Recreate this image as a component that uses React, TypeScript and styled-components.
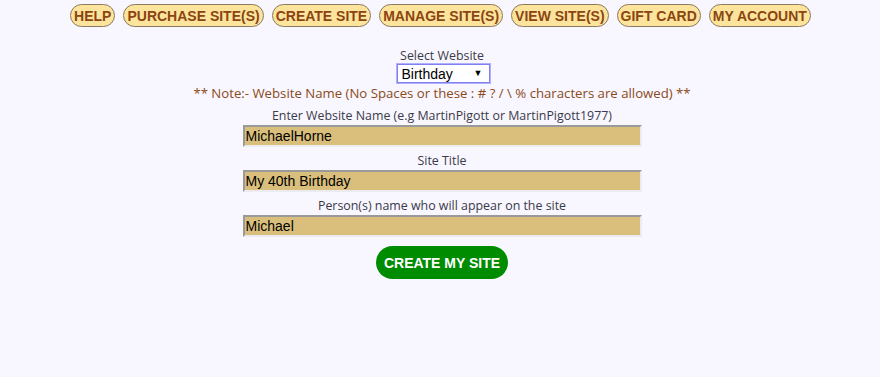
import React, { useState } from 'react';
import styled, { createGlobalStyle } from 'styled-components';

const GlobalStyle = createGlobalStyle`
    html, body {
        margin: 0;
        padding: 0;
        background: #f8f6fe;
    }
`;

const Page = styled.div`
    width: 880px;
    min-height: 377px;
    background: #f8f6fe;
    font-family: 'Open Sans', 'Noto Sans', sans-serif;
`;

const NavBar = styled.nav`
    display: flex;
    justify-content: center;
    gap: 8px;
    padding-top: 4px;
    padding-left: 1px;
`;

const NavButton = styled.a`
    display: inline-flex;
    align-items: center;
    height: 21px;
    padding: 0 3px;
    border: 1px solid #8a7a60;
    border-radius: 12px;
    background: #fde49c;
    color: #8b4513;
    font: bold 14px 'Liberation Sans', Arial, sans-serif;
    text-decoration: none;
    cursor: pointer;
`;

const Form = styled.form`
    display: flex;
    flex-direction: column;
    align-items: center;
    margin-top: 21px;
    padding-left: 4px;
`;

const Label = styled.label`
    color: #3a3a4a;
    font-size: 12.4px;
    line-height: 16px;
`;

const SelectWrap = styled.div`
    display: flex;
    position: relative;
    margin-left: 2px;

    &::after {
        content: '▼';
        position: absolute;
        right: 7px;
        top: 3px;
        font-size: 9px;
        line-height: 12px;
        color: #000;
        pointer-events: none;
    }
`;

const Select = styled.select`
    box-sizing: border-box;
    width: 93px;
    height: 19px;
    padding: 0 4px;
    border: 1px solid #8080f0;
    outline: 1px solid #b0b0ff;
    background: #fff;
    font: 14px 'Liberation Sans', Arial, sans-serif;
    color: #000;
    appearance: none;
`;

const Note = styled.p`
    margin: 1px 0 6px;
    color: #8b4a1a;
    font-size: 13.2px;
    line-height: 18px;
`;

const Field = styled.div`
    display: flex;
    flex-direction: column;
    align-items: center;
    margin-bottom: 6px;
`;

const TextInput = styled.input`
    box-sizing: border-box;
    width: 399px;
    height: 22px;
    margin-top: 1px;
    padding: 1px 1px;
    border: 2px solid;
    border-color: #9a9a9a #ececf0 #ececf0 #9a9a9a;
    background: #d9bf7b;
    color: #000;
    font: 14px 'Liberation Sans', Arial, sans-serif;
    outline: none;
`;

const SubmitButton = styled.button`
    margin-top: 3px;
    height: 33px;
    padding: 0 8px;
    border: none;
    border-radius: 17px;
    background: #008c00;
    color: #fff;
    font: bold 14px 'Liberation Sans', Arial, sans-serif;
    cursor: pointer;
`;

const navItems = ['HELP', 'PURCHASE SITE(S)', 'CREATE SITE', 'MANAGE SITE(S)', 'VIEW SITE(S)', 'GIFT CARD', 'MY ACCOUNT'];

export default function App() {
    const [name, setName] = useState('MichaelHorne');
    const [title, setTitle] = useState('My 40th Birthday');
    const [person, setPerson] = useState('Michael');

    return (
        <Page>
            <GlobalStyle />
            <NavBar>
                {navItems.map(item => <NavButton key={item}>{item}</NavButton>)}
            </NavBar>
            <Form onSubmit={e => e.preventDefault()}>
                <Label>Select Website</Label>
                <SelectWrap>
                    <Select defaultValue="Birthday">
                        <option>Birthday</option>
                        <option>Wedding</option>
                        <option>Memorial</option>
                    </Select>
                </SelectWrap>
                <Note>** Note:- Website Name (No Spaces or these : # ? / \ % characters are allowed) **</Note>
                <Field>
                    <Label>Enter Website Name (e.g MartinPigott or MartinPigott1977)</Label>
                    <TextInput value={name} onChange={e => setName(e.target.value)} />
                </Field>
                <Field>
                    <Label>Site Title</Label>
                    <TextInput value={title} onChange={e => setTitle(e.target.value)} />
                </Field>
                <Field>
                    <Label>Person(s) name who will appear on the site</Label>
                    <TextInput value={person} onChange={e => setPerson(e.target.value)} />
                </Field>
                <SubmitButton type="submit">CREATE MY SITE</SubmitButton>
            </Form>
        </Page>
    );
}
